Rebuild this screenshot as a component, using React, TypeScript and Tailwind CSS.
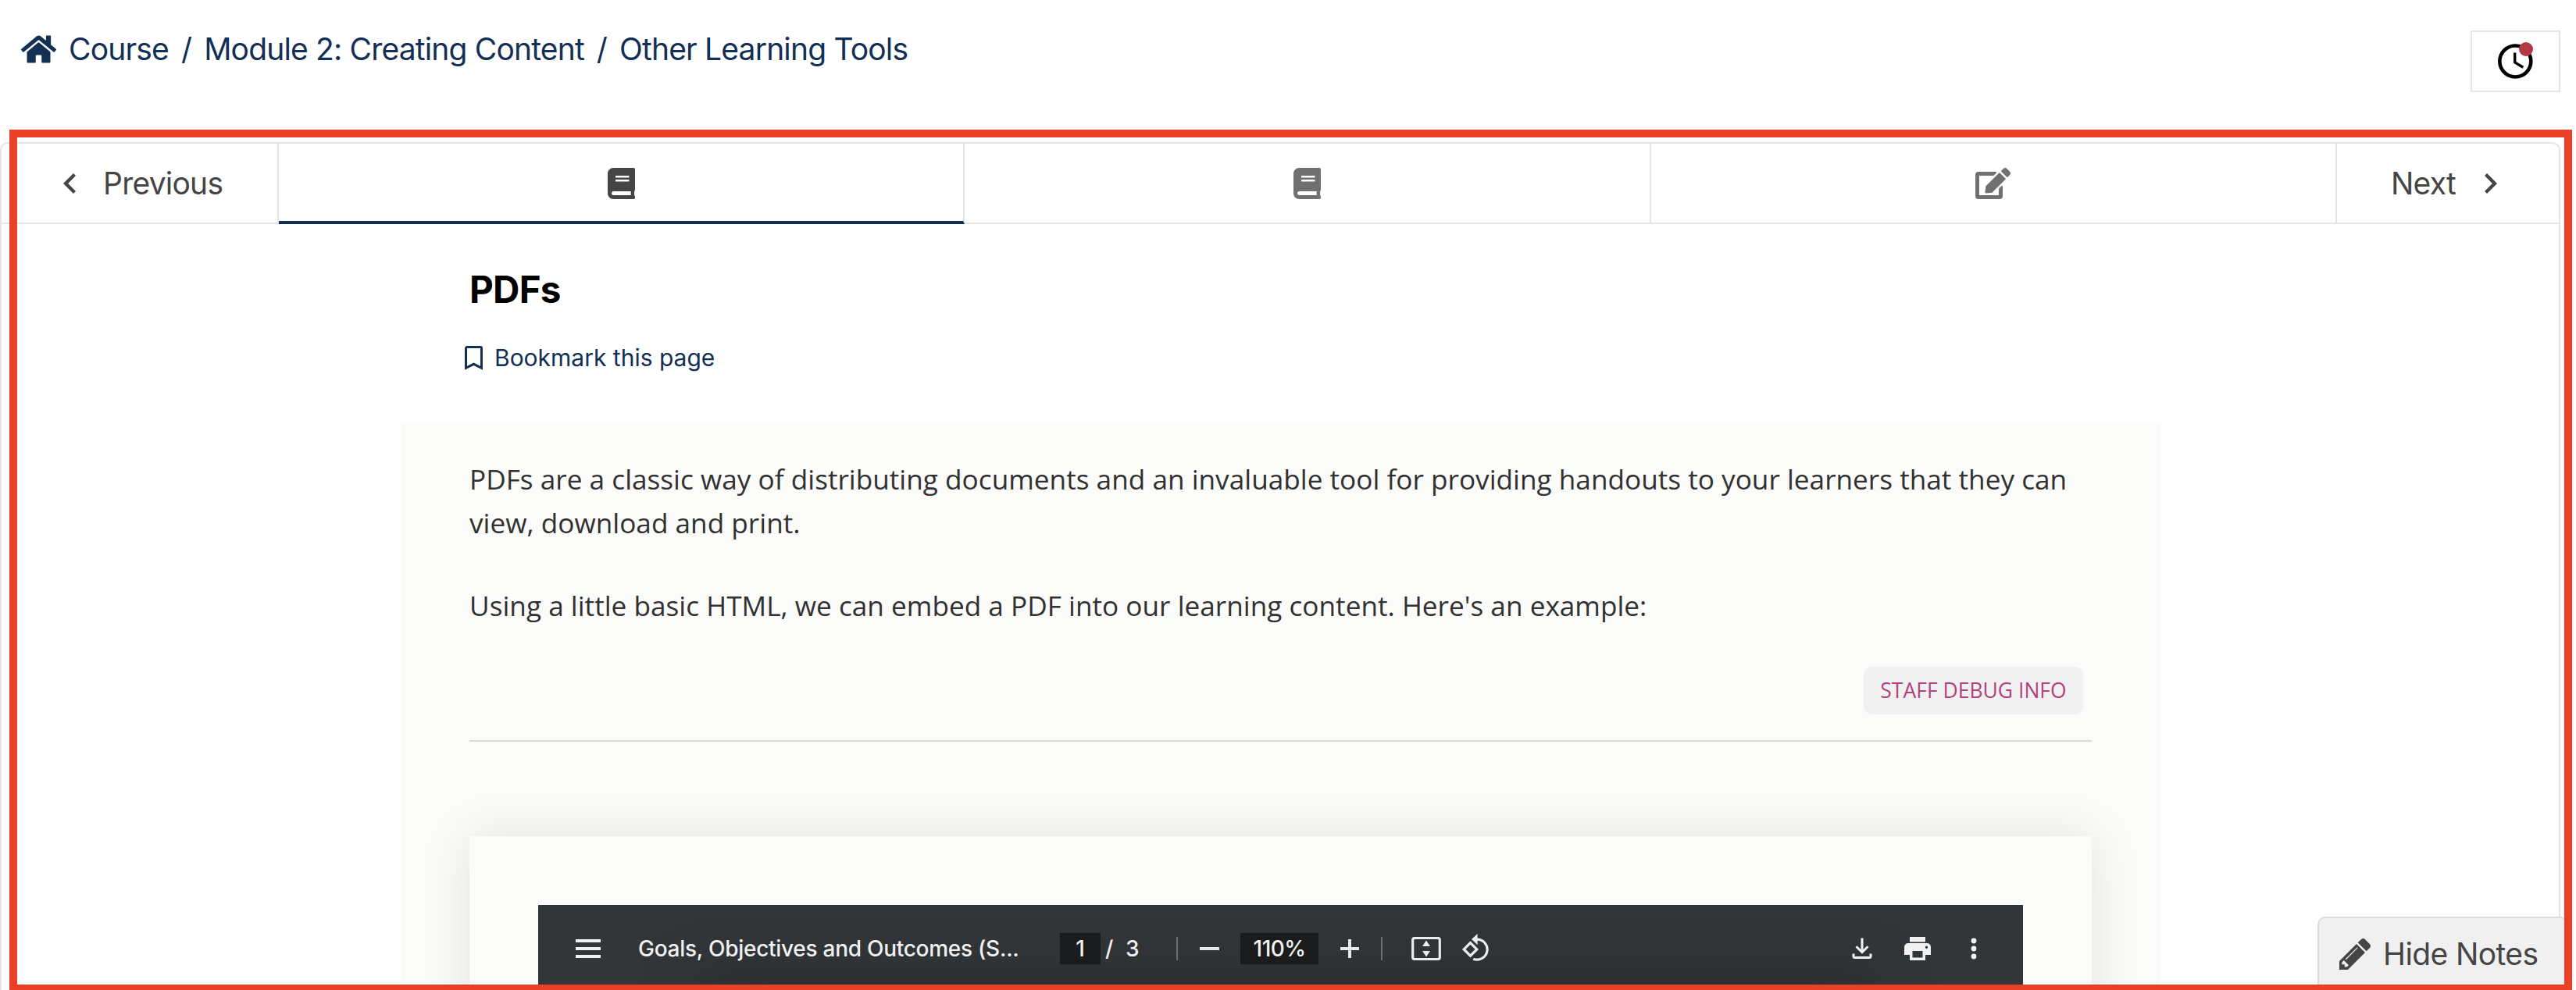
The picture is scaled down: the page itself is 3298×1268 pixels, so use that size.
import React from 'react';
import { FaHome, FaBook, FaEdit } from 'react-icons/fa';

function ChevronLeft() {
  return (
    <svg viewBox="8 6 7.41 12" width="16" height="26" fill="currentColor">
      <path d="M15.41 7.41 14 6l-6 6 6 6 1.41-1.41L10.83 12z" />
    </svg>
  );
}

function ChevronRight() {
  return (
    <svg viewBox="8.59 6 7.41 12" width="16" height="26" fill="currentColor">
      <path d="M10 6 8.59 7.41 13.17 12l-4.58 4.59L10 18l6-6z" />
    </svg>
  );
}

function ClockIcon() {
  return (
    <svg viewBox="0 0 45 45" width="45" height="45" fill="none" stroke="#000">
      <circle cx="22.3" cy="22.5" r="20" strokeWidth="4.6" />
      <path d="M21.7 11.5v12.4l10.6 6.3" strokeWidth="3.4" />
    </svg>
  );
}

function BookmarkIcon() {
  return (
    <svg viewBox="0 0 23 31" width="23" height="31" fill="none" stroke="currentColor" strokeWidth="3">
      <path d="M1.5 28.4V3a1.5 1.5 0 0 1 1.5-1.5h17A1.5 1.5 0 0 1 21.5 3v25.4L11.5 23.3z" />
    </svg>
  );
}

/* Classic pencil with an eraser band and a highlighted barrel */
function PencilIcon() {
  return (
    <svg viewBox="0 0 1515 1515" width="40" height="40" fill="currentColor">
      <path
        transform="translate(0 -128)"
        d="M363 1515l91-91-235-235-91 91v107h128v128h107zm523-928q0-22-22-22-10 0-17 7l-542 542q-7 7-7 17 0 22 22 22 10 0 17-7l542-542q7-7 7-17zm-54-192l416 416-832 832h-416v-416zm683 96q0 53-37 90l-166 166-416-416 166-165q36-38 90-38 53 0 91 38l235 234q37 39 37 91z"
      />
    </svg>
  );
}

function Breadcrumbs() {
  return (
    <nav className="mt-[43px] flex h-10 items-center text-[39px] leading-10 tracking-[-0.83px] whitespace-nowrap text-[#132f54]">
      <FaHome className="h-10 w-[45px]" />
      <a className="ml-4">Course</a>
      <span className="ml-4">/</span>
      <a className="ml-4">Module 2: Creating Content</a>
      <span className="ml-4">/</span>
      <a className="ml-4">Other Learning Tools</a>
    </nav>
  );
}

function SequenceNav() {
  return (
    <div className="flex h-[103px] text-[39px] tracking-[-0.76px] text-[#454545]">
      <button className="flex w-[355px] items-center border-r-2 border-b-2 border-[#e5e5e5] pl-[79px]">
        <ChevronLeft />
        <span className="ml-[35px] pt-0.5">Previous</span>
      </button>
      <div className="flex w-[2635px]">
        <button className="flex flex-1 items-center justify-center border-r-2 border-b-4 border-r-[#e5e5e5] border-b-[#132f54] pt-0.5">
          <FaBook className="h-10 w-[35px]" />
        </button>
        <button className="flex flex-1 items-center justify-center border-r-2 border-b-2 border-[#e5e5e5] text-[#707070]">
          <FaBook className="h-10 w-[35px]" />
        </button>
        <button className="flex flex-1 items-center justify-center border-r-2 border-b-2 border-[#e5e5e5] text-[#707070]">
          <FaEdit className="h-10 w-[45px]" />
        </button>
      </div>
      <button className="flex flex-1 items-center border-b-2 border-[#e5e5e5] pl-[69px]">
        <span className="pt-0.5">Next</span>
        <span className="ml-[37px]">
          <ChevronRight />
        </span>
      </button>
    </div>
  );
}

function PdfToolbar() {
  return (
    <div className="relative flex h-28 items-center overflow-hidden bg-[#323639] pl-12 text-[28px] font-medium tracking-[-0.27px] text-[#f1f1f1]">
      <div className="absolute top-[116px] right-[210px] left-[230px] h-10 shadow-[0_0_70px_20px_rgba(40,40,44,0.9)]" />
      <div className="relative flex flex-1 items-center">
        <div className="flex w-8 flex-col gap-1.5">
          <div className="h-1 bg-[#f1f1f1]" />
          <div className="h-1 bg-[#f1f1f1]" />
          <div className="h-1 bg-[#f1f1f1]" />
        </div>
        <div className="ml-12 w-[540px] whitespace-nowrap">Goals, Objectives and Outcomes (S...</div>
        <div className="flex h-10 w-[52px] items-center justify-center bg-[#191b1c]">1</div>
        <span className="ml-1.5">/</span>
        <span className="ml-4 w-5">3</span>
        <div className="ml-[45px] h-[30px] w-[2px] bg-[#6b6e70]" />
        <div className="ml-7 h-1 w-[25px] bg-[#e8e8e8]" />
        <div className="ml-[27px] flex h-10 w-[100px] items-center justify-center bg-[#191b1c] tracking-[-0.5px]">
          110%
        </div>
        <svg className="ml-7" viewBox="0 0 24 24" width="24" height="24" fill="#e8e8e8">
          <path d="M10 0h4v10h10v4H14v10h-4V14H0v-4h10z" />
        </svg>
        <div className="ml-7 h-[30px] w-[2px] bg-[#6b6e70]" />
        <svg className="ml-[37px]" viewBox="0 0 38 30" width="38" height="30">
          <rect x="1.7" y="1.5" width="34.6" height="27" rx="2.5" fill="none" stroke="#ececee" strokeWidth="3.2" />
          <path d="M19 4.5l5 7.5H14zM19 25.5l5-7.5H14z" fill="#ececee" />
        </svg>
        <svg className="-mt-[2px] ml-[26px]" viewBox="0 0 36 36" width="36" height="36" fill="none" stroke="#ececee" strokeWidth="3.2">
          <path d="M11.5 11.6l8.3 8.3-8.3 8.3-8.3-8.3z" />
          <path d="M19 7.2a13 13 0 1 1-3.8 25" />
          <path d="M20.6 0v14.2L13 7.1z" fill="#ececee" stroke="none" />
        </svg>
      </div>
      <div className="relative mr-[59px] flex items-center">
        <svg viewBox="0 0 26 27" width="26" height="27" fill="none" stroke="#f1f1f1" strokeWidth="3">
          <path d="M13 0.5v18M5.5 11.2l7.5 7.5 7.5-7.5" />
          <path d="M2 20.5v3.5a1.5 1.5 0 0 0 1.5 1.5h19a1.5 1.5 0 0 0 1.5-1.5v-3.5" />
        </svg>
        <svg className="ml-[41px]" viewBox="0 0 34 30" width="34" height="30" fill="#f1f1f1">
          <path
            fillRule="evenodd"
            d="M7 0h20v6.5H7zM5 8h24a5 5 0 0 1 5 5v10h-7v7H7v-7H0V13a5 5 0 0 1 5-5zm5.500 10v8.500h13V18zM28.500 11.500a1.700 1.700 0 1 0 0 3.400 1.700 1.700 0 0 0 0-3.400z"
          />
        </svg>
        <svg className="ml-[51px]" viewBox="0 0 8 28" width="8" height="28" fill="#f1f1f1">
          <circle cx="4" cy="4" r="3.4" />
          <circle cx="4" cy="14" r="3.4" />
          <circle cx="4" cy="24" r="3.4" />
        </svg>
      </div>
    </div>
  );
}

export default function App() {
  return (
    <div className="relative h-[1268px] w-full overflow-hidden bg-white font-['Inter',sans-serif]">
      <header className="flex h-[182px] items-start justify-between pr-5 pl-[27px]">
        <Breadcrumbs />
        <button className="relative mt-[39px] flex h-[79px] w-[115px] items-start border-2 border-[#e5e5e5] pt-[15px] pl-[33px]">
          <ClockIcon />
          <span className="absolute top-[13px] left-[60px] size-[18px] rounded-full bg-[#b33a43]" />
        </button>
      </header>

      <main className="h-[1090px] w-[3278px] rounded-t-[10px] border-2 border-[#e5e5e5]">
        <SequenceNav />
        <h1 className="mt-[55px] ml-[599px] h-[58px] text-[47.5px] leading-[58px] font-bold tracking-[-0.7px] text-black">
          PDFs
        </h1>
        <button className="mt-[38px] ml-[593px] flex h-10 items-center text-[30px] text-[#132f54]">
          <BookmarkIcon />
          <span className="ml-[15px]">Bookmark this page</span>
        </button>

        <section className="mt-[63px] ml-[511px] h-[740px] w-[2253px] bg-[#fbfbfa] px-[88px] pt-11 font-['Open_Sans',sans-serif] text-[35.2px] leading-[56.32px] text-[#313131]">
          <p>
            PDFs are a classic way of distributing documents and an invaluable tool for providing handouts to your
            learners that they can view, download and print.
          </p>
          <p className="mt-[49.3px]">
            Using a little basic HTML, we can embed a PDF into our learning content. Here's an example:
          </p>
          <div className="mt-[50.74px] flex justify-end pr-[11px]">
            <button className="h-[61px] w-[281px] rounded-[11px] bg-[#f1f1f1] text-[26.5px] leading-[60px] whitespace-nowrap text-[#b3427c]">
              STAFF DEBUG INFO
            </button>
          </div>
          <hr className="mt-[33px] border-t-2 border-[#dcdcdb]" />
          <div className="mt-[121px] h-[300px] bg-[#fbfbfa] px-[88px] pt-[88px] font-['Inter',sans-serif] shadow-[0_0_60px_rgba(0,0,0,0.1)]">
            <PdfToolbar />
          </div>
        </section>
      </main>

      <button className="absolute top-[1174px] left-[2967px] flex h-[110px] w-[320px] items-start rounded-t-[10px] border-2 border-[#dcdcdc] bg-[#f0f0f0] pt-[26px] pl-[26px] text-[39px] leading-10 tracking-[-0.6px] whitespace-nowrap text-[#454545]">
        <PencilIcon />
        <span className="ml-4">Hide Notes</span>
      </button>

      <div className="pointer-events-none absolute top-[166px] bottom-0 left-3 w-[3281px] border-10 border-b-[7px] border-[#ea4025]" />
    </div>
  );
}
